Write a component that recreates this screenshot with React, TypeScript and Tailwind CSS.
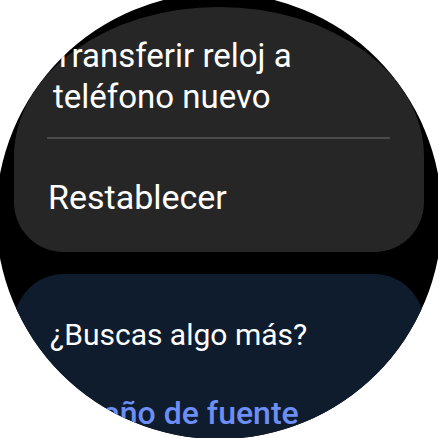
import React from 'react';

// Wear OS style settings list, seen through the round watch mask
export default function App() {
  return (
    <div className="w-[438px] h-[438px] overflow-hidden bg-white font-['Roboto',sans-serif]">
      {/* round screen */}
      <div className="w-[446px] h-[446px] -ml-[4px] -mt-[7px] pl-[4px] pt-[7px] rounded-full overflow-hidden bg-black">
        <div className="w-[438px] flex flex-col gap-[22px] px-[14px] pt-[7px]">
          {/* Card: transfer / reset */}
          <section className="bg-[#262626] rounded-[206px_206px_50px_50px/150px_150px_50px_50px] px-[34px] pt-[28px] pb-[34px] text-white">
            <p className="text-[33px] leading-[41px] pl-[5px]">
              Transferir reloj a teléfono nuevo
            </p>
            <div className="h-[2px] bg-[#4a4a4a] mt-[20px] -ml-[1px]" />
            <p className="text-[34px] leading-[41px] mt-[38px]">Restablecer</p>
          </section>

          {/* Card: more */}
          <section className="bg-[#0f1c2e] rounded-t-[50px] h-[220px] px-[36px] pt-[43px]">
            <p className="text-[30px] leading-[36px] text-white">¿Buscas algo más?</p>
            <p className="text-[32px] leading-[40px] mt-[40px] -ml-[10px] font-medium text-[#6d8ef5] whitespace-nowrap">
              Tamaño de fuente
            </p>
          </section>
        </div>
      </div>
    </div>
  );
}
